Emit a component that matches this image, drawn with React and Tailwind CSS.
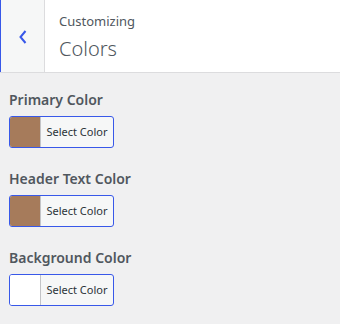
const controls = [
  { label: "Primary Color", color: "#a67b5b" },
  { label: "Header Text Color", color: "#a67b5b" },
  { label: "Background Color", color: "#ffffff" },
];

function ColorControl({ label, color }) {
  return (
    <div className="mb-[21px]">
      <p className="text-[14px] font-semibold leading-[20px] text-[#50575e]">{label}</p>
      <button
        type="button"
        className="mt-[6px] flex h-[32px] w-[105px] overflow-hidden rounded-[3px] border border-[#3858e9] bg-[#f6f7f7] p-0"
      >
        <span className="h-full w-[31px] border-r border-[#c3c4c7]" style={{ backgroundColor: color }} />
        <span className="flex flex-1 items-center justify-center text-[11px] text-[#2c3338]">Select Color</span>
      </button>
    </div>
  );
}

export default function App() {
  return (
    <div className="h-[324px] w-[340px] bg-[#f0f0f1] font-['Noto_Sans',sans-serif]">
      <div className="flex h-[73px] border-b border-[#dcdcde] bg-white">
        <div className="flex w-[45px] items-center justify-center border-l border-l-[#3858e9] border-r border-r-[#dcdcde] bg-[#f6f7f7]">
          <svg width="10" height="16" viewBox="0 0 10 16" className="mt-[1px]">
            <path d="M7.5 2 L2.5 8 L7.5 14" fill="none" stroke="#3858e9" strokeWidth="2" />
          </svg>
        </div>
        <div className="flex flex-col pl-[14px] pt-[11px]">
          <span className="text-[13px] leading-[20px] text-[#50575e]">Customizing</span>
          <span className="mt-[6px] text-[20px] font-light leading-[24px] text-[#50575e]">Colors</span>
        </div>
      </div>
      <div className="px-[9px] pt-[17px]">
        {controls.map((item) => (
          <ColorControl key={item.label} {...item} />
        ))}
      </div>
    </div>
  );
}
